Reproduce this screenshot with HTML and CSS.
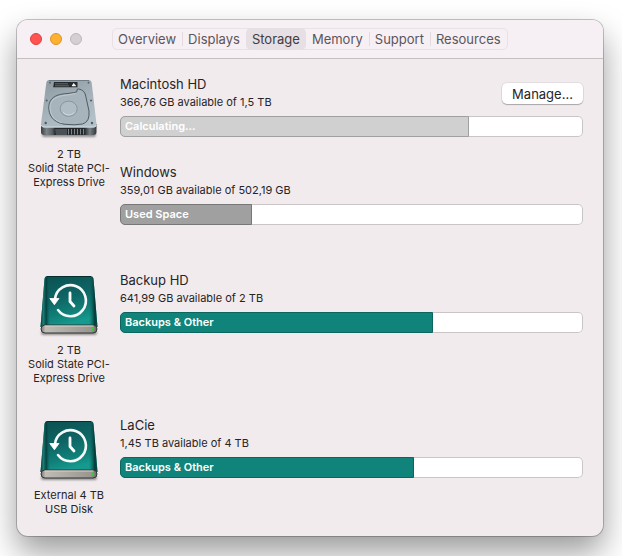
FILE: index.html
```html
<!DOCTYPE html>
<html lang="en">
<head>
<meta charset="utf-8">
<meta name="viewport" content="width=device-width, initial-scale=1">
<title>Storage</title>
<link rel="stylesheet" href="styles.css">
</head>
<body>
<svg class="defs" aria-hidden="true">
  <defs>
    <linearGradient id="cover" x1="0" y1="0" x2="0.3" y2="1">
      <stop offset="0" stop-color="#0b4f4f"/><stop offset="0.5" stop-color="#0e6665"/><stop offset="0.8" stop-color="#118078"/><stop offset="1" stop-color="#159a8f"/>
    </linearGradient>
    <linearGradient id="edge" x1="0" y1="0" x2="1" y2="0">
      <stop offset="0" stop-color="#022d2c" stop-opacity="0.9"/><stop offset="0.05" stop-color="#1b7c76" stop-opacity="0.8"/><stop offset="0.1" stop-color="#033d3b" stop-opacity="0.9"/><stop offset="0.17" stop-color="#0b6662" stop-opacity="0"/><stop offset="0.85" stop-color="#0b6662" stop-opacity="0"/><stop offset="0.95" stop-color="#022d2c" stop-opacity="0.85"/><stop offset="1" stop-color="#0a4d4a"/>
    </linearGradient>
    <linearGradient id="base" x1="0" y1="0" x2="1" y2="0">
      <stop offset="0" stop-color="#77736f"/><stop offset="0.08" stop-color="#c0bbb5"/><stop offset="0.9" stop-color="#99958f"/><stop offset="1" stop-color="#696763"/>
    </linearGradient>
    <linearGradient id="metal" x1="0" y1="0" x2="0.5" y2="1">
      <stop offset="0" stop-color="#8b989f"/><stop offset="0.5" stop-color="#a1aeb6"/><stop offset="1" stop-color="#b4c0c7"/>
    </linearGradient>
    <linearGradient id="foot" x1="0" y1="0" x2="1" y2="0">
      <stop offset="0" stop-color="#383d40"/><stop offset="0.1" stop-color="#7b8388"/><stop offset="0.2" stop-color="#5a6266"/><stop offset="0.26" stop-color="#24282a"/><stop offset="0.78" stop-color="#24282a"/><stop offset="0.88" stop-color="#788085"/><stop offset="1" stop-color="#303538"/>
    </linearGradient>
    <filter id="soft" x="-20%" y="-100%" width="140%" height="300%"><feGaussianBlur stdDeviation="1"/></filter>
    <symbol id="internal-drive" viewBox="0 0 64 64">
      <rect x="5" y="55" width="54" height="4" rx="2" fill="#000" opacity="0.4" filter="url(#soft)"/>
      <path d="M4 46H59.500V54Q59.500 57 56.500 57H7Q4 57 4 54Z" fill="url(#foot)"/>
      <path d="M18 51H30V57H19Z" fill="#495156"/>
      <path d="M31.500 51V56.500M34.500 51V56.500M37.500 51V56.500M40.500 51V56.500M43.500 51V56.500M46.500 51V56.500" stroke="#7b858b" stroke-width="1"/>
      <path d="M12.500 2H51.500Q54.300 2 54.700 5L59.500 46Q59.500 49.500 56.500 49.500H7Q3.800 49.500 4 46L9.300 5Q9.700 2 12.500 2Z" fill="url(#metal)"/>
      <path d="M12 2.500H52" stroke="#6b777e" stroke-width="0.900"/>
      <path d="M4.500 47Q5 49 7 49H56.500Q58.700 49 59.200 47" fill="none" stroke="#d3dce1"/>
      <path d="M40 13.500V12Q40 10.500 42 11Q47.500 12.500 48.500 17L52 33Q53 44 45.500 46Q38 47.500 27 46.200C15 44 11.500 36 11.800 29C12 20 19 17 26 16Q40 14.500 40 13.500Z" fill="#a7b4bb" stroke="#4f5b62" stroke-width="1"/>
      <path d="M39 15.500Q31 17 26 17.500C18 19 13 23 13 29C13 37 17 42.500 25 44.800" fill="none" stroke="#c8d2d8" stroke-width="0.700"/>
      <ellipse cx="31.700" cy="30.700" rx="8.500" ry="7.600" fill="#b0bdc4" stroke="#7f8c94" stroke-width="0.800"/>
      <path d="M26 34.500Q31.700 39.500 37.500 34.500" fill="none" stroke="#d0d9de"/>
      <path d="M17 4H40.500V9.300H16.200Z" fill="#25292b"/>
      <path d="M18 5.800H31M18 7.800H32" stroke="#747d82" stroke-width="0.800"/>
      <path d="M34.800 8.300Q34.800 6.500 36 6.200Q36.800 4 37.500 6.200Q39 6.500 39 8.300Z" fill="#f6f8f9"/>
      <g fill="#4f5b63"><circle cx="13" cy="4.700" r="0.900"/><circle cx="51.500" cy="4.700" r="0.900"/><circle cx="9.700" cy="22.500" r="1"/><circle cx="54" cy="22.500" r="1"/><circle cx="8.700" cy="45" r="1.200"/><circle cx="55" cy="45" r="1.200"/></g>
    </symbol>
    <symbol id="backup-drive" viewBox="0 0 64 64">
      <rect x="4" y="57" width="56" height="4" rx="2" fill="#000" opacity="0.4" filter="url(#soft)"/>
      <path d="M11 2H53Q56 2 56.500 5L60.500 53H3.500L7.500 5Q8 2 11 2Z" fill="url(#cover)"/>
      <path d="M11 2H53Q56 2 56.500 5L60.500 53H3.500L7.500 5Q8 2 11 2Z" fill="url(#edge)"/>
      <path d="M10 2.500H54" stroke="#052f2e"/>
      <rect x="4" y="51" width="56" height="8" rx="4" fill="url(#base)" stroke="#303735"/>
      <path d="M7.500 52H56.500" stroke="#dcd7d1" stroke-width="0.900"/>
      <circle cx="55.500" cy="55" r="1.500" fill="#24dc2e"/>
      <path d="M18 25A15.500 15.500 0 1 1 21 36" fill="none" stroke="#f4faf9" stroke-width="2.600" stroke-linecap="round"/>
      <path d="M12.800 24.500H22L17.400 30.800Z" fill="#fff" stroke="#fff" stroke-width="0.800" stroke-linejoin="round"/>
      <path d="M33 19V27.500L37 32" fill="none" stroke="#fff" stroke-width="2.800" stroke-linecap="round" stroke-linejoin="round"/>
    </symbol>
  </defs>
</svg>
<main class="window">
  <header class="titlebar">
    <div class="lights">
      <button class="light close" aria-label="Close"></button>
      <button class="light minimize" aria-label="Minimize"></button>
      <button class="light zoom" aria-label="Zoom" disabled></button>
    </div>
    <nav class="tabs">
      <button class="tab">Overview</button>
      <button class="tab">Displays</button>
      <button class="tab selected" aria-current="page">Storage</button>
      <button class="tab">Memory</button>
      <button class="tab">Support</button>
      <button class="tab">Resources</button>
    </nav>
  </header>
  <div class="drives">
    <section class="drive">
      <div class="device">
        <svg class="icon" aria-hidden="true"><use href="#internal-drive"/></svg>
        <div>2 TB<br>Solid State PCI-<br>Express Drive</div>
      </div>
      <div class="volumes">
        <article class="volume">
          <div class="heading">
            <div><h2 class="name">Macintosh HD</h2><p class="space">366,76 GB available of 1,5 TB</p></div>
            <button class="manage">Manage...</button>
          </div>
          <div class="bar"><div class="fill calculating" style="width:75.4%">Calculating...</div></div>
        </article>
        <article class="volume">
          <div class="heading"><div><h2 class="name">Windows</h2><p class="space">359,01 GB available of 502,19 GB</p></div></div>
          <div class="bar"><div class="fill used" style="width:28.5%">Used Space</div></div>
        </article>
      </div>
    </section>
    <section class="drive">
      <div class="device">
        <svg class="icon" aria-hidden="true"><use href="#backup-drive"/></svg>
        <div>2 TB<br>Solid State PCI-<br>Express Drive</div>
      </div>
      <div class="volumes">
        <article class="volume">
          <div class="heading"><div><h2 class="name">Backup HD</h2><p class="space">641,99 GB available of 2 TB</p></div></div>
          <div class="bar"><div class="fill backups" style="width:67.6%">Backups &amp; Other</div></div>
        </article>
      </div>
    </section>
    <section class="drive">
      <div class="device">
        <svg class="icon" aria-hidden="true"><use href="#backup-drive"/></svg>
        <div>External 4 TB<br>USB Disk</div>
      </div>
      <div class="volumes">
        <article class="volume">
          <div class="heading"><div><h2 class="name">LaCie</h2><p class="space">1,45 TB available of 4 TB</p></div></div>
          <div class="bar"><div class="fill backups" style="width:63.5%">Backups &amp; Other</div></div>
        </article>
      </div>
    </section>
  </div>
</main>
</body>
</html>
```
FILE: styles.css
```css
* { box-sizing: border-box; }
html { background: #fff; }
body {
  margin: 0;
  padding: 20px 19px 20px 17px;
  overflow: hidden;
  font-family: Inter, "Liberation Sans", sans-serif;
  color: #272426;
}
button { font: inherit; color: inherit; padding: 0; border: 0; }
.defs { position: absolute; width: 0; height: 0; }
.window {
  border-radius: 11px;
  background: #f1ebed;
  box-shadow: 0 0 0 1px rgba(0, 0, 0, 0.22), 0 16px 32px rgba(0, 0, 0, 0.4);
}
.titlebar {
  display: flex;
  align-items: center;
  gap: 30px;
  height: 39px;
  padding-left: 13px;
  border-bottom: 1px solid #c5bfc2;
  border-radius: 11px 11px 0 0;
  background: #f6eff4;
}
.lights { display: flex; gap: 8px; }
.light { width: 12px; height: 12px; border-radius: 50%; }
.close { background: #ff5450; border: 1px solid #df403d; }
.minimize { background: #fdb132; border: 1px solid #de9426; }
.zoom { background: #d5ced3; border: 1px solid #bdb6bb; }
.tabs {
  display: flex;
  height: 22px;
  border: 1px solid #e8e1e6;
  border-radius: 5px;
}
.tab {
  position: relative;
  padding: 0 6px;
  background: none;
  font-size: 13px;
  line-height: 20px;
  color: #5b565a;
}
.tab:first-child { padding-left: 5px; }
.tab + .tab:not(.selected)::before {
  content: "";
  position: absolute;
  left: 0;
  top: 3px;
  bottom: 3px;
  width: 1px;
  background: #e2dbe0;
}
.tab.selected + .tab::before { display: none; }
.tab.selected { margin: -1px 0; border-radius: 5px; background: #e6dfe4; color: #403c3f; }
.drives {
  display: flex;
  flex-direction: column;
  gap: 33px;
  padding: 18px 20px 20px 8px;
}
.drive { display: grid; grid-template-columns: 88px 1fr; gap: 7px; }
.device { text-align: center; font-size: 11px; line-height: 14px; white-space: nowrap; }
.icon { display: block; width: 64px; height: 64px; margin: 1px auto 5px; }
.volumes { display: flex; flex-direction: column; gap: 28px; padding-bottom: 15px; }
.heading { display: flex; justify-content: space-between; align-items: flex-end; margin-bottom: 7px; }
.name { margin: 0 0 4px; font-size: 13px; line-height: 14px; font-weight: 400; }
.space { margin: 0; font-size: 11px; line-height: 14px; }
.manage {
  width: 81px;
  height: 21px;
  margin-bottom: 5px;
  border-radius: 5px;
  background: #fff;
  box-shadow: 0 0 0 1px rgba(0, 0, 0, 0.06), 0 1px 1px rgba(0, 0, 0, 0.25);
  font-size: 13px;
}
.bar {
  height: 21px;
  border-radius: 5px;
  background: #fff;
  box-shadow: inset 0 0 0 1px #c9c5c7;
}
.fill {
  height: 100%;
  padding-left: 4px;
  border: 1px solid;
  border-radius: 5px 0 0 5px;
  font-size: 11px;
  line-height: 19px;
  font-weight: 600;
  color: #fff;
  white-space: nowrap;
}
.calculating { background: #d0d0d0; border-color: #a0a0a0; }
.used { background: #a0a0a0; border-color: #777; }
.backups { background: #10847a; border-color: #0a665e; }
```
